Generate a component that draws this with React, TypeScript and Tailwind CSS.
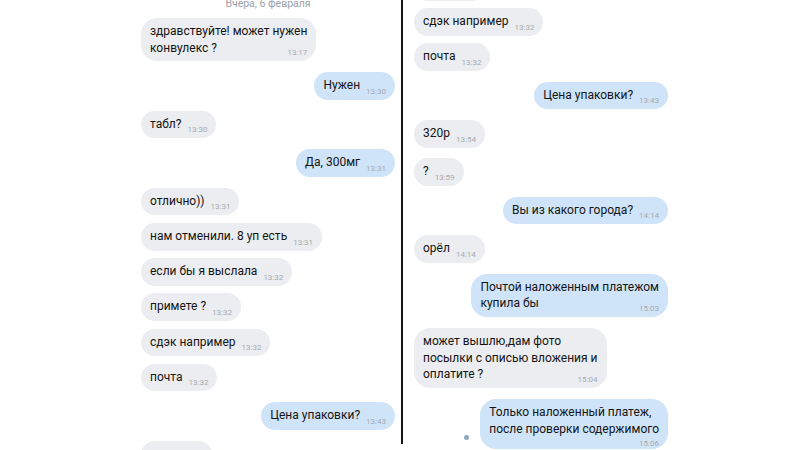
import React from "react";

interface Msg {
  out?: boolean;
  lines: string[];
  time: string;
  mt: string;
  timeOwnLine?: boolean;
  dot?: boolean;
  hidden?: boolean;
}

const leftMsgs: Msg[] = [
  { lines: ["здравствуйте! может нужен", "конвулекс ?"], time: "13:17", mt: "mt-[8px]" },
  { out: true, lines: ["Нужен"], time: "13:30", mt: "mt-[11px]" },
  { lines: ["табл?"], time: "13:30", mt: "mt-[11px]" },
  { out: true, lines: ["Да, 300мг"], time: "13:31", mt: "mt-[11px]" },
  { lines: ["отлично))"], time: "13:31", mt: "mt-[11px]" },
  { lines: ["нам отменили. 8 уп есть"], time: "13:31", mt: "mt-[7.7px]" },
  { lines: ["если бы я выслала"], time: "13:32", mt: "mt-[7.7px]" },
  { lines: ["примете ?"], time: "13:32", mt: "mt-[7.7px]" },
  { lines: ["сдэк например"], time: "13:32", mt: "mt-[7.7px]" },
  { lines: ["почта"], time: "13:32", mt: "mt-[7.7px]" },
  { out: true, lines: ["Цена упаковки?"], time: "13:43", mt: "mt-[11px]" },
  { lines: ["320р"], time: "13:54", mt: "mt-[11px]", hidden: true },
];

const rightMsgs: Msg[] = [
  { lines: ["примете ?"], time: "13:32", mt: "mt-[-27px]", hidden: true },
  { lines: ["сдэк например"], time: "13:32", mt: "mt-[7.7px]" },
  { lines: ["почта"], time: "13:32", mt: "mt-[7.7px]" },
  { out: true, lines: ["Цена упаковки?"], time: "13:43", mt: "mt-[11px]" },
  { lines: ["320р"], time: "13:54", mt: "mt-[11px]" },
  { lines: ["?"], time: "13:59", mt: "mt-[10.3px]" },
  { out: true, lines: ["Вы из какого города?"], time: "14:14", mt: "mt-[11px]" },
  { lines: ["орёл"], time: "14:14", mt: "mt-[11px]" },
  { out: true, lines: ["Почтой наложенным платежом", "купила бы"], time: "15:03", mt: "mt-[11px]" },
  {
    lines: ["может вышлю,дам фото", "посылки с описью вложения и", "оплатите ?"],
    time: "15:04",
    mt: "mt-[11px]",
  },
  {
    out: true,
    lines: ["Только наложенный платеж,", "после проверки содержимого"],
    time: "15:06",
    mt: "mt-[11px]",
    timeOwnLine: true,
    dot: true,
  },
];

const Time: React.FC<{ t: string }> = ({ t }) => (
  <span className="text-[8px] leading-[7px] text-[#a7abb1] shrink-0">{t}</span>
);

const Bubble: React.FC<{ m: Msg }> = ({ m }) => {
  const bg = m.out ? "bg-[#cfe4f8]" : "bg-[#ebedf0]";
  const multi = m.lines.length > 1;
  return (
    <div className={`flex items-end ${m.out ? "justify-end" : "justify-start"} ${m.mt}`}>
      {m.dot && <div className="w-[5px] h-[5px] rounded-full bg-[#8ea8c3] mr-[11px] mb-[9px]" />}
      {m.hidden ? (
        // cut off by the screenshot edge: only the bubble shape shows
        <div className={`${bg} rounded-[14px] h-[27.5px] w-[71px]`} />
      ) : !multi ? (
        <div className={`${bg} rounded-[14px] px-[9px] py-[5px] flex items-end gap-[6px]`}>
          <span className="text-[12px] leading-[17.5px] text-[#141414]">{m.lines[0]}</span>
          <Time t={m.time} />
        </div>
      ) : m.timeOwnLine ? (
        <div className={`${bg} rounded-[16px] px-[9px] pt-[5px] pb-[1px] flex flex-col`}>
          {m.lines.map((l) => (
            <div key={l} className="text-[12px] leading-[16.7px] text-[#141414]">
              {l}
            </div>
          ))}
          <div className="flex justify-end mt-[2px]">
            <span className="text-[8px] leading-[8px] text-[#a7abb1]">{m.time}</span>
          </div>
        </div>
      ) : (
        <div className={`${bg} rounded-[16px] px-[9px] py-[5px] flex flex-col`}>
          {m.lines.slice(0, -1).map((l) => (
            <div key={l} className="text-[12px] leading-[16.7px] text-[#141414]">
              {l}
            </div>
          ))}
          <div className="flex items-end justify-between gap-[6px]">
            <span className="text-[12px] leading-[16.7px] text-[#141414]">
              {m.lines[m.lines.length - 1]}
            </span>
            <Time t={m.time} />
          </div>
        </div>
      )}
    </div>
  );
};

const App: React.FC = () => {
  return (
    <div
      className="w-[800px] h-[450px] bg-white overflow-hidden flex items-start"
      style={{ fontFamily: "Roboto, 'Noto Sans', sans-serif" }}
    >
      <div className="ml-[141px] w-[254px] h-[450px] overflow-hidden flex flex-col">
        <div className="mt-[-2px] text-center text-[10.5px] leading-[12px] text-[#9ca1a7]">
          Вчера, 6 февраля
        </div>
        {leftMsgs.map((m, i) => (
          <Bubble key={i} m={m} />
        ))}
      </div>

      <div className="ml-[6px] w-[2px] h-[444px] bg-[#151515]" />

      <div className="ml-[11px] w-[254px] h-[450px] overflow-hidden flex flex-col">
        {rightMsgs.map((m, i) => (
          <Bubble key={i} m={m} />
        ))}
      </div>
    </div>
  );
};

export default App;
